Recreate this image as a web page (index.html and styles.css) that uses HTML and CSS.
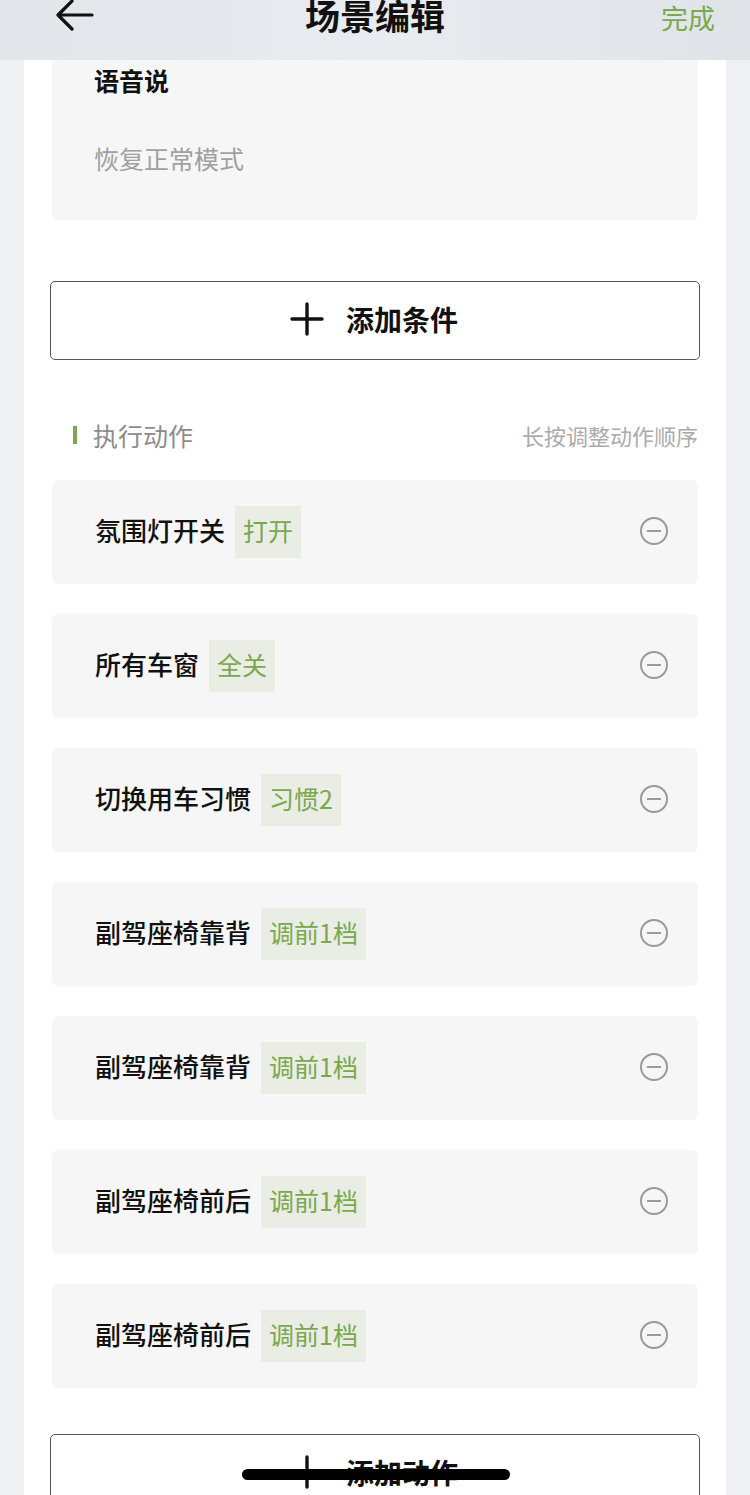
FILE: index.html
```html
<!DOCTYPE html>
<html lang="zh-CN">
<head>
<meta charset="utf-8">
<title>场景编辑</title>
<link rel="stylesheet" href="styles.css">
</head>
<body>
<header class="topbar">
  <svg class="back" width="40" height="34" viewBox="0 0 40 34"><path d="M38 15H4M18 1L4 15l14 14" fill="none" stroke="#111" stroke-width="3.2" stroke-linecap="round" stroke-linejoin="round"/></svg>
  <h1 class="title">场景编辑</h1>
  <span class="done">完成</span>
</header>
<main class="card">
  <section class="cond">
    <div class="cond-title">语音说</div>
    <div class="cond-value">恢复正常模式</div>
  </section>
  <button class="add-btn cond-add">
    <svg width="34" height="34" viewBox="0 0 34 34"><path d="M17 2v30M2 17h30" stroke="#111" stroke-width="3.4" stroke-linecap="round"/></svg>
    <span>添加条件</span>
  </button>
  <div class="sec-head">
    <div class="sec-title"><i class="bar"></i>执行动作</div>
    <div class="sec-hint">长按调整动作顺序</div>
  </div>
  <ul class="actions">
    <li class="action"><span class="name">氛围灯开关</span><span class="tag">打开</span><span class="minus"></span></li>
    <li class="action"><span class="name">所有车窗</span><span class="tag">全关</span><span class="minus"></span></li>
    <li class="action"><span class="name">切换用车习惯</span><span class="tag">习惯2</span><span class="minus"></span></li>
    <li class="action"><span class="name">副驾座椅靠背</span><span class="tag">调前1档</span><span class="minus"></span></li>
    <li class="action"><span class="name">副驾座椅靠背</span><span class="tag">调前1档</span><span class="minus"></span></li>
    <li class="action"><span class="name">副驾座椅前后</span><span class="tag">调前1档</span><span class="minus"></span></li>
    <li class="action"><span class="name">副驾座椅前后</span><span class="tag">调前1档</span><span class="minus"></span></li>
  </ul>
  <button class="add-btn act-add">
    <svg width="34" height="34" viewBox="0 0 34 34"><path d="M17 2v30M2 17h30" stroke="#111" stroke-width="3.4" stroke-linecap="round"/></svg>
    <span>添加动作</span>
  </button>
</main>
<div class="home-ind"></div>
</body>
</html>
```
FILE: styles.css
```css
* { box-sizing: border-box; }
html, body { margin: 0; padding: 0; }
body {
  width: 750px;
  height: 1495px;
  overflow: hidden;
  background: #eef0f3;
  font-family: "Noto Sans CJK SC", "Noto Sans", sans-serif;
  color: #111;
  position: relative;
}
.topbar {
  height: 60px;
  background: linear-gradient(90deg, #e2e5e9, #e8ebef 50%, #e0e3e7);
  position: relative;
  display: flex;
  align-items: flex-start;
  justify-content: space-between;
  padding: 0 35px 0 54px;
}
.title {
  position: absolute;
  left: 0; right: 0;
  top: -10px;
  margin: 0;
  text-align: center;
  font-size: 35px;
  font-weight: 700;
  line-height: 50px;
}
.done {
  margin-top: -7px;
  font-size: 27px;
  line-height: 50px;
  color: #7aa84d;
}
.card {
  margin: 0 24px;
  background: #fff;
  padding: 0 26px;
  height: 1435px;
}
.cond {
  margin: 0 2px;
  height: 160px;
  background: #f6f6f6;
  border-radius: 0 0 6px 6px;
  padding: 2px 0 0 42px;
}
.cond-title {
  font-size: 25px;
  font-weight: 700;
  line-height: 36px;
}
.cond-value {
  margin-top: 42px;
  font-size: 25px;
  line-height: 36px;
  color: #a0a0a0;
}
.add-btn {
  display: flex;
  align-items: center;
  justify-content: center;
  gap: 22px;
  width: 100%;
  height: 79px;
  background: #fff;
  border: 1.5px solid #555;
  border-radius: 5px;
  font-family: inherit;
  font-size: 28px;
  font-weight: 700;
  color: #111;
  padding: 0 2px 3px 0;
}
.cond-add { margin-top: 61px; }
.sec-head {
  margin-top: 56px;
  height: 40px;
  display: flex;
  align-items: center;
  justify-content: space-between;
  padding: 0 2px 3px 23px;
}
.sec-title {
  display: flex;
  align-items: center;
  font-size: 25px;
  color: #8c8c8c;
}
.bar {
  display: inline-block;
  width: 4px;
  height: 18px;
  background: #7aa84d;
  margin-right: 16px;
}
.sec-hint {
  font-size: 22px;
  color: #ababab;
}
.actions {
  list-style: none;
  margin: 24px 2px 0;
  padding: 0;
  display: flex;
  flex-direction: column;
  gap: 30px;
}
.action {
  height: 104px;
  background: #f6f6f6;
  border-radius: 6px;
  display: flex;
  align-items: center;
  padding: 0 30px 0 43px;
}
.name {
  font-size: 26px;
  font-weight: 500;
  color: #111;
  padding-bottom: 5px;
}
.tag {
  margin-left: 10px;
  height: 52px;
  display: flex;
  align-items: center;
  padding: 0 8px 4px;
  background: #e9ede4;
  color: #7aa84d;
  font-size: 25px;
}
.minus {
  margin-left: auto;
  width: 28px;
  height: 28px;
  border: 2.2px solid #9a9a9a;
  border-radius: 50%;
  position: relative;
  top: -1px;
}
.minus::after {
  content: "";
  position: absolute;
  left: 5px; right: 5px;
  top: 50%;
  height: 2.2px;
  margin-top: -1.1px;
  background: #9a9a9a;
}
.act-add { margin-top: 46px; }
.home-ind {
  position: absolute;
  left: 242px;
  top: 1469px;
  width: 268px;
  height: 11px;
  border-radius: 6px;
  background: #000;
}
```
